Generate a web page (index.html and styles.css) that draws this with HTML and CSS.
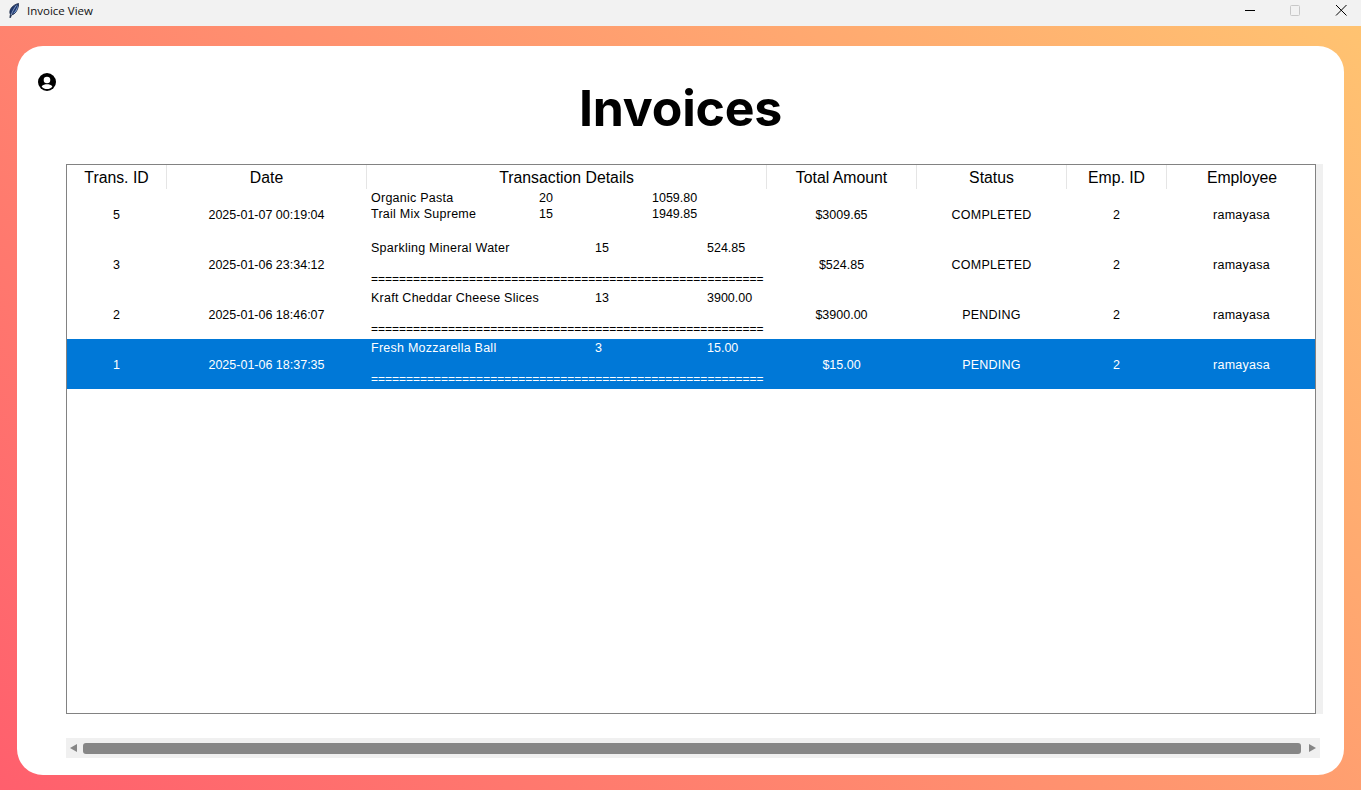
FILE: index.html
```html
<!DOCTYPE html>
<html lang="en">
<head>
<meta charset="utf-8">
<title>Invoice View</title>
<link rel="stylesheet" href="styles.css">
</head>
<body>
<div class="window">
  <header class="titlebar">
    <div class="titlebar-left">
      <svg class="app-icon" width="10" height="15" viewBox="0 0 10 15">
        <path d="M9.6 .4 C6.6 1 3.2 3 1.6 6 C.6 8 .6 10 1.4 11.4 L.8 14.6 L1.6 14.6 L2.4 12 C5 11.6 7.2 9.4 8.4 6.4 C9.2 4.4 9.8 2.2 9.6 .4 Z" fill="#20386e" stroke="#101c3a" stroke-width=".7"/>
        <path d="M8.6 2 C8.4 4.6 7 8 4 10.6 C6 10 7.6 8 8.2 6 C8.7 4.6 8.9 3.2 8.6 2 Z" fill="#8fb4ea"/>
        <path d="M7.4 2.4 C5.4 5 3.4 8.4 2.2 12" fill="none" stroke="#cfe0f7" stroke-width=".6"/>
      </svg>
      <span class="window-title">Invoice View</span>
    </div>
    <div class="controls">
      <svg class="ctl" width="46" height="26" viewBox="0 0 46 26"><path d="M22 10.5H32" stroke="#000" stroke-width="1"/></svg>
      <svg class="ctl" width="46" height="26" viewBox="0 0 46 26"><rect x="21.5" y="5.5" width="9" height="10" rx="1" fill="none" stroke="#c8c8c8" stroke-width="1"/></svg>
      <svg class="ctl" width="46" height="26" viewBox="0 0 46 26"><path d="M21 5 L31.5 15.5 M31.5 5 L21 15.5" stroke="#000" stroke-width="1"/></svg>
    </div>
  </header>
  <main class="backdrop">
    <section class="card">
      <div class="card-head">
        <svg class="user-icon" width="18" height="18" viewBox="0 0 18 18">
          <circle cx="9" cy="9" r="9" fill="#000"/>
          <circle cx="9" cy="7" r="3.3" fill="#fff"/>
          <path d="M3.6 13.4 C5 11.6 7 11.3 9 11.3 C11 11.3 13 11.6 14.4 13.4 C13 15.2 11 16 9 16 C7 16 5 15.2 3.6 13.4 Z" fill="#fff"/>
        </svg>
        <h1 class="page-title">Invoices</h1>
      </div>
      <div class="tree-area">
        <div class="tree">
          <table class="grid">
            <colgroup>
              <col class="c-id"><col class="c-date"><col class="c-details"><col class="c-total"><col class="c-status"><col class="c-emp"><col class="c-name">
            </colgroup>
            <thead>
              <tr>
                <th>Trans. ID</th><th>Date</th><th>Transaction Details</th><th>Total Amount</th><th>Status</th><th>Emp. ID</th><th>Employee</th>
              </tr>
            </thead>
            <tbody>
              <tr>
                <td>5</td><td>2025-01-07 00:19:04</td>
                <td class="details">
                  <div class="line narrow"><span>Organic Pasta</span><span>20</span><span>1059.80</span></div>
                  <div class="line narrow"><span>Trail Mix Supreme</span><span>15</span><span>1949.85</span></div>
                  <div class="line blank">&nbsp;</div>
                </td>
                <td>$3009.65</td><td class="txt">COMPLETED</td><td>2</td><td class="txt">ramayasa</td>
              </tr>
              <tr>
                <td>3</td><td>2025-01-06 23:34:12</td>
                <td class="details">
                  <div class="line"><span>Sparkling Mineral Water</span><span>15</span><span>524.85</span></div>
                  <div class="line blank">&nbsp;</div>
                  <div class="line rule">========================================================</div>
                </td>
                <td>$524.85</td><td class="txt">COMPLETED</td><td>2</td><td class="txt">ramayasa</td>
              </tr>
              <tr>
                <td>2</td><td>2025-01-06 18:46:07</td>
                <td class="details">
                  <div class="line"><span>Kraft Cheddar Cheese Slices</span><span>13</span><span>3900.00</span></div>
                  <div class="line blank">&nbsp;</div>
                  <div class="line rule">========================================================</div>
                </td>
                <td>$3900.00</td><td class="txt">PENDING</td><td>2</td><td class="txt">ramayasa</td>
              </tr>
              <tr class="selected">
                <td>1</td><td>2025-01-06 18:37:35</td>
                <td class="details">
                  <div class="line"><span>Fresh Mozzarella Ball</span><span>3</span><span>15.00</span></div>
                  <div class="line blank">&nbsp;</div>
                  <div class="line rule">========================================================</div>
                </td>
                <td>$15.00</td><td class="txt">PENDING</td><td>2</td><td class="txt">ramayasa</td>
              </tr>
            </tbody>
          </table>
        </div>
        <div class="vscroll"></div>
      </div>
      <div class="hscroll">
        <span class="arrow arrow-left"></span>
        <span class="thumb"></span>
        <span class="arrow arrow-right"></span>
      </div>
    </section>
  </main>
</div>
</body>
</html>
```
FILE: styles.css
```css
* { box-sizing: border-box; }
html, body { margin: 0; height: 100%; overflow: hidden; }
body { font-family: "Liberation Sans", Arial, sans-serif; color: #000; }
.window { display: flex; flex-direction: column; height: 790px; }

.titlebar { flex: 0 0 26px; height: 26px; min-height: 0; overflow: hidden; display: flex; justify-content: space-between; background: #f2f2f2; }
.titlebar-left { display: flex; align-items: center; padding: 0 0 5px 9px; gap: 8px; }
.app-icon { display: block; }
.window-title { font-family: "Open Sans", sans-serif; font-size: 11.5px; color: #111; }
.controls { display: flex; }
.ctl { display: block; }

.backdrop { flex: 1; padding: 20px 17px 15px; background: linear-gradient(45deg, #ff5f6d, #ffc371); }
.card { height: 100%; background: #fff; border-radius: 26px; padding: 0 21px; display: flex; flex-direction: column; }
.card-head { display: grid; grid-template-columns: 1fr auto 1fr; height: 118px; align-items: start; }
.user-icon { margin-top: 27px; display: block; }
.page-title { grid-column: 2; margin: 29px 0 0; font-family: Inter, sans-serif; font-weight: 700; font-size: 50px; line-height: 66px; letter-spacing: -.2px; }

.tree-area { display: flex; height: 550px; margin-left: 28px; }
.tree { width: 1250px; border: 1px solid #828282; overflow: hidden; background: #fff; }
.vscroll { width: 7px; background: #f0f0f0; }
.grid { border-collapse: separate; border-spacing: 0; table-layout: fixed; width: 1250px; }
.c-id, .c-emp { width: 100px; }
.c-date { width: 200px; }
.c-details { width: 400px; }
.c-total, .c-status, .c-name { width: 150px; }
.grid th { height: 24px; padding: 1px 0 0; font-size: 15.8px; font-weight: 400; text-align: center; border-right: 1px solid #e5e5e5; }
.grid th:last-child { border-right: 0; }
.grid td { height: 50px; padding: 1px 1px 0 0; font-size: 12.5px; text-align: center; vertical-align: middle; }
.grid td.txt { letter-spacing: .25px; }
.grid td.details { text-align: left; padding: 0 0 1px 4px; }
.line { display: grid; grid-template-columns: 224px 112px auto; line-height: 16px; height: 16px; white-space: nowrap; }
.line.narrow { grid-template-columns: 168px 113px auto; }
.line span:first-child { letter-spacing: .25px; }
.line:last-child { height: 15px; line-height: 15px; }
.line.rule { display: block; font-size: 12px; }
.selected td { background: #0078d7; color: #fff; }

.hscroll { margin: 24px 0 0 28px; width: 1254px; height: 20px; background: #f0f0f0; display: flex; align-items: center; padding: 0 4px; }
.thumb { flex: 1; height: 11px; background: #868686; border-radius: 3px; margin: 0 8px 0 6px; }
.arrow { width: 0; height: 0; border-top: 4.5px solid transparent; border-bottom: 4.5px solid transparent; }
.arrow-left { border-right: 7px solid #868686; }
.arrow-right { border-left: 7px solid #868686; }
```
